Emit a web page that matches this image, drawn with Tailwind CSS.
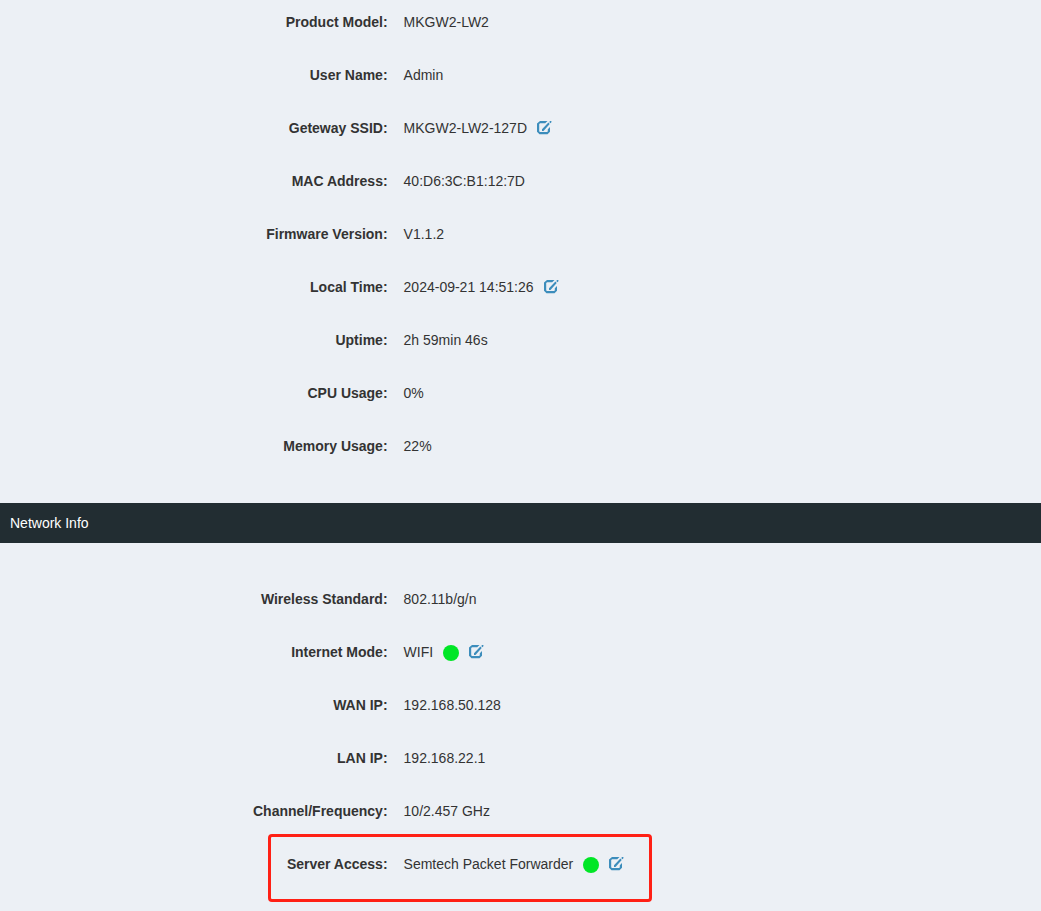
<!DOCTYPE html>
<html lang="en">
<head>
<meta charset="utf-8">
<meta name="viewport" content="width=device-width, initial-scale=1">
<title>Network Info</title>
<script src="https://cdn.jsdelivr.net/npm/@tailwindcss/browser@4"></script>
</head>
<body class="bg-[#ecf0f5] font-['Liberation_Sans',Arial,sans-serif] text-sm leading-5 text-[#333]">
<svg class="hidden" aria-hidden="true">
  <symbol id="edit" viewBox="0 0 16 14">
    <path d="M10.500 0H3L0 2.500V10.800L2.500 13.200H10.500L13 10.800V6L10.800 8.200V10.200L10.200 11H2.900L2.200 10.300V3L3.100 2.300H8.200Z" fill="currentColor"/>
    <path d="M5 9.900V8.300L11.400 1.600 12.700 2.900 6.500 9.900Z M12.200 .900 13.100 0H14.400V1.300L13.500 2.200Z" fill="currentColor"/>
  </symbol>
</svg>
<main>
  <dl class="pt-3 pb-4">
    <div class="flex pb-[33px]"><dt class="w-[38%] px-2 text-right font-bold">Product Model:</dt><dd class="px-2">MKGW2-LW2</dd></div>
    <div class="flex pb-[33px]"><dt class="w-[38%] px-2 text-right font-bold">User Name:</dt><dd class="px-2">Admin</dd></div>
    <div class="flex pb-[33px]"><dt class="w-[38%] px-2 text-right font-bold">Geteway SSID:</dt><dd class="flex items-center gap-2.5 px-2">MKGW2-LW2-127D<a href="#ssid" aria-label="Edit gateway SSID" class="text-[#3c8dbc]"><svg class="h-3.5 w-4"><use href="#edit"/></svg></a></dd></div>
    <div class="flex pb-[33px]"><dt class="w-[38%] px-2 text-right font-bold">MAC Address:</dt><dd class="px-2">40:D6:3C:B1:12:7D</dd></div>
    <div class="flex pb-[33px]"><dt class="w-[38%] px-2 text-right font-bold">Firmware Version:</dt><dd class="px-2">V1.1.2</dd></div>
    <div class="flex pb-[33px]"><dt class="w-[38%] px-2 text-right font-bold">Local Time:</dt><dd class="flex items-center gap-2.5 px-2">2024-09-21 14:51:26<a href="#time" aria-label="Edit local time" class="text-[#3c8dbc]"><svg class="h-3.5 w-4"><use href="#edit"/></svg></a></dd></div>
    <div class="flex pb-[33px]"><dt class="w-[38%] px-2 text-right font-bold">Uptime:</dt><dd class="px-2">2h 59min 46s</dd></div>
    <div class="flex pb-[33px]"><dt class="w-[38%] px-2 text-right font-bold">CPU Usage:</dt><dd class="px-2">0%</dd></div>
    <div class="flex pb-[31px]"><dt class="w-[38%] px-2 text-right font-bold">Memory Usage:</dt><dd class="px-2">22%</dd></div>
  </dl>
  <h2 class="bg-[#222d32] p-2.5 text-white">Network Info</h2>
  <dl class="pt-[46px]">
    <div class="flex pb-[33px]"><dt class="w-[38%] px-2 text-right font-bold">Wireless Standard:</dt><dd class="px-2">802.11b/g/n</dd></div>
    <div class="flex pb-[33px]"><dt class="w-[38%] px-2 text-right font-bold">Internet Mode:</dt><dd class="flex items-center gap-2.5 px-2">WIFI<span class="mt-0.5 size-4 rounded-full bg-[#00e626]"></span><a href="#internet" aria-label="Edit internet mode" class="text-[#3c8dbc]"><svg class="h-3.5 w-4"><use href="#edit"/></svg></a></dd></div>
    <div class="flex pb-[33px]"><dt class="w-[38%] px-2 text-right font-bold">WAN IP:</dt><dd class="px-2">192.168.50.128</dd></div>
    <div class="flex pb-[33px]"><dt class="w-[38%] px-2 text-right font-bold">LAN IP:</dt><dd class="px-2">192.168.22.1</dd></div>
    <div class="flex pb-[33px]"><dt class="w-[38%] px-2 text-right font-bold">Channel/Frequency:</dt><dd class="px-2">10/2.457 GHz</dd></div>
    <div class="relative flex pb-[33px] before:pointer-events-none before:absolute before:-top-5 before:left-[calc(38%-128px)] before:h-[68px] before:w-[384px] before:rounded-sm before:border-3 before:border-[#ff2015]"><dt class="w-[38%] px-2 text-right font-bold">Server Access:</dt><dd class="flex items-center gap-2.5 px-2">Semtech Packet Forwarder<span class="mt-0.5 size-4 rounded-full bg-[#00e626]"></span><a href="#server" aria-label="Edit server access" class="text-[#3c8dbc]"><svg class="h-3.5 w-4"><use href="#edit"/></svg></a></dd></div>
  </dl>
</main>
</body>
</html>
